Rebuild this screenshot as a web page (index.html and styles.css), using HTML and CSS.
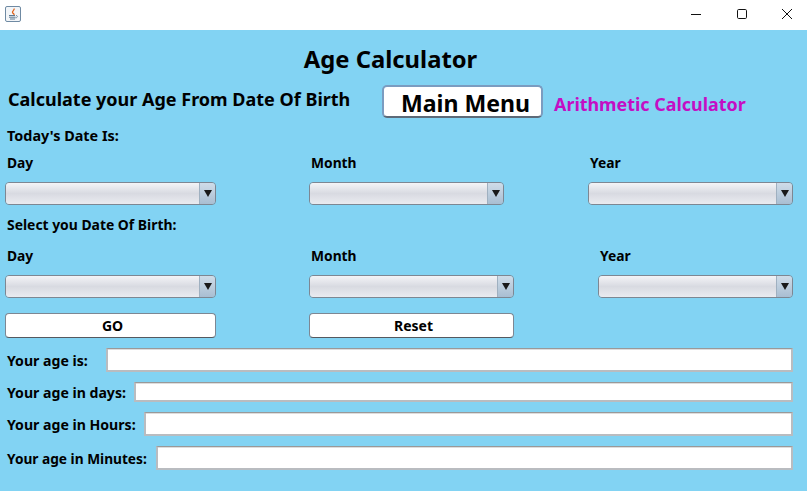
FILE: index.html
```html
<!DOCTYPE html>
<html lang="en">
<head>
    <meta charset="UTF-8">
    <meta name="viewport" content="width=device-width, initial-scale=1.0">
    <title>Age Calculator</title>
    <link rel="stylesheet" href="styles.css">
</head>
<body>
    <div class="titlebar">
        <svg class="app-icon" width="16" height="16" viewBox="0 0 16 16">
            <rect x="0.5" y="0.5" width="15" height="15" rx="1.5" fill="#f2f5f8" stroke="#6f8aa3"/>
            <path d="M9 2.5C10 4 7 5 7.5 6.5S9.5 7.5 9 9" fill="none" stroke="#e0641c" stroke-width="1.3"/>
            <path d="M4 9.5h6M4 11.2h6.5M5 13h5" stroke="#5b7890" stroke-width="1"/>
            <path d="M11 9.5c2 0 2 2-.5 2.5" fill="none" stroke="#5b7890" stroke-width="0.8"/>
        </svg>
        <div class="window-buttons">
            <svg width="10" height="10" viewBox="0 0 10 10"><path d="M0 5.5h10" stroke="#111" stroke-width="1"/></svg>
            <svg width="10" height="10" viewBox="0 0 10 10"><rect x="0.5" y="0.5" width="9" height="9" rx="1.2" fill="none" stroke="#111" stroke-width="1"/></svg>
            <svg width="10" height="10" viewBox="0 0 10 10"><path d="M0 0l10 10M10 0L0 10" stroke="#111" stroke-width="1"/></svg>
        </div>
    </div>

    <div class="panel">
        <h1>Age Calculator</h1>

        <div class="heading-row">
            <h2>Calculate your Age From Date Of Birth</h2>
            <button class="main-menu">Main Menu</button>
            <a class="arith-link">Arithmetic Calculator</a>
        </div>

        <div class="section-label today-label">Today's Date Is:</div>
        <div class="date-row first-labels">
            <span class="col-day label">Day</span>
            <span class="col-month label">Month</span>
            <span class="col-year label">Year</span>
        </div>
        <div class="date-row combos">
            <div class="combo col-day"><div class="combo-field"></div><div class="combo-arrow"></div></div>
            <div class="combo col-month"><div class="combo-field"></div><div class="combo-arrow"></div></div>
            <div class="combo col-year"><div class="combo-field"></div><div class="combo-arrow"></div></div>
        </div>

        <div class="section-label birth-label">Select you Date Of Birth:</div>
        <div class="date-row second-labels wide">
            <span class="col-day label">Day</span>
            <span class="col-month label">Month</span>
            <span class="col-year label">Year</span>
        </div>
        <div class="date-row combos wide">
            <div class="combo col-day"><div class="combo-field"></div><div class="combo-arrow"></div></div>
            <div class="combo col-month"><div class="combo-field"></div><div class="combo-arrow"></div></div>
            <div class="combo col-year"><div class="combo-field"></div><div class="combo-arrow"></div></div>
        </div>

        <div class="date-row actions wide">
            <button class="col-day action">GO</button>
            <button class="col-month action">Reset</button>
        </div>

        <div class="result result-age">
            <label class="result-label">Your age is:</label>
            <input class="result-input" type="text">
        </div>
        <div class="result result-days">
            <label class="result-label">Your age in days:</label>
            <input class="result-input" type="text">
        </div>
        <div class="result result-hours">
            <label class="result-label">Your age in Hours:</label>
            <input class="result-input" type="text">
        </div>
        <div class="result result-minutes">
            <label class="result-label">Your age in Minutes:</label>
            <input class="result-input" type="text">
        </div>
    </div>
</body>
</html>
```

FILE: styles.css
```css
html, body {
    height: 100%;
}
body {
    margin: 0;
    display: flex;
    flex-direction: column;
    overflow: hidden;
    font-family: "Noto Sans", sans-serif;
    font-weight: bold;
    color: #000;
    background-color: #82d3f3;
}
.titlebar {
    height: 30px;
    flex-shrink: 0;
    display: flex;
    align-items: center;
    justify-content: space-between;
    background-color: #fff;
    padding: 0 15px 2px 5px;
    box-sizing: border-box;
}
.window-buttons {
    display: flex;
    gap: 35.5px;
}
.panel {
    flex: 1;
    padding: 0 14px 0 0;
}
h1 {
    font-size: 23.8px;
    line-height: 30px;
    margin: 14px 0 0;
    padding-right: 12px;
    text-align: center;
}
.heading-row {
    display: flex;
    align-items: flex-start;
    margin-top: 11px;
    height: 33px;
    padding-left: 8px;
}
h2 {
    width: 374px;
    flex-shrink: 0;
    margin: 0;
    font-size: 18px;
    line-height: 28px;
    white-space: nowrap;
}
.main-menu {
    width: 161px;
    height: 33px;
    padding: 0 0 3px 17px;
    text-align: left;
    font-family: inherit;
    font-weight: bold;
    font-size: 23.1px;
    background: #fff;
    border: 2px solid #7b9cc0;
    border-bottom-color: #5d6a78;
    border-radius: 5px;
    box-sizing: border-box;
    color: #000;
}
.arith-link {
    margin: 7px 0 0 11px;
    font-size: 17.9px;
    line-height: 24px;
    color: #c40ec4;
    white-space: nowrap;
}
.section-label, .label {
    font-size: 13.8px;
    white-space: nowrap;
}
.section-label {
    height: 18px;
    line-height: 18px;
    padding-left: 7px;
}
.today-label {
    margin-top: 9px;
    font-size: 14.4px;
}
.birth-label {
    margin-top: 11px;
    font-size: 13.9px;
}
.date-row {
    display: flex;
    padding-left: 5px;
    margin: 0;
}
.first-labels, .second-labels {
    height: 18px;
    line-height: 18px;
}
.first-labels {
    margin-top: 9px;
}
.second-labels {
    margin-top: 13px;
}
.label {
    padding-left: 2px;
    box-sizing: border-box;
}
.combos {
    margin-top: 10px;
}
.col-day {
    width: 211px;
    margin-right: 93px;
}
.col-month {
    width: 195px;
    margin-right: 84px;
}
.col-year {
    width: 205px;
}
.wide .col-month {
    width: 205px;
}
.wide .col-year {
    width: 195px;
}
.combo {
    display: flex;
    height: 23px;
    box-sizing: border-box;
    border: 1px solid #7d8793;
    border-radius: 4px;
    overflow: hidden;
}
.combo-field {
    flex: 1;
    background: linear-gradient(#f3f4f7, #d8dae1 50%, #eaebf0);
}
.combo-arrow {
    width: 15px;
    position: relative;
    background: linear-gradient(#cfdce8, #a9bed2);
    border-left: 1px solid #9fb0c0;
}
.combo-arrow::after {
    content: "";
    position: absolute;
    left: 4px;
    top: 7px;
    border-left: 4px solid transparent;
    border-right: 4px solid transparent;
    border-top: 7px solid #1a1a1a;
}
.actions {
    margin-top: 15px;
}
.action {
    height: 25px;
    padding: 0 0 0 4px;
    font-family: inherit;
    font-weight: bold;
    font-size: 14px;
    color: #000;
    background: #fff;
    border: 1px solid #7d8793;
    border-bottom-color: #55595f;
    border-radius: 4px;
}
.result {
    display: flex;
    align-items: center;
    padding-left: 7px;
}
.result-label {
    flex-shrink: 0;
    font-size: 14.1px;
    white-space: nowrap;
}
.result-input {
    flex: 1;
    min-width: 0;
    box-sizing: border-box;
    height: 100%;
    background: #fff;
    border: 2px solid #b9bcc0;
    border-top: 1px solid #999;
    box-shadow: inset 0 1px 0 #ddd;
    outline: 0;
}
.result-age {
    height: 24px;
    margin-top: 10px;
}
.result-age .result-label {
    width: 99px;
}
.result-days {
    height: 20px;
    margin-top: 10px;
}
.result-days .result-label {
    width: 127px;
}
.result-hours {
    height: 24px;
    margin-top: 10px;
}
.result-hours .result-label {
    width: 137px;
}
.result-minutes {
    height: 24px;
    margin-top: 10px;
}
.result-minutes .result-label {
    width: 149px;
    font-size: 13.7px;
}
```
